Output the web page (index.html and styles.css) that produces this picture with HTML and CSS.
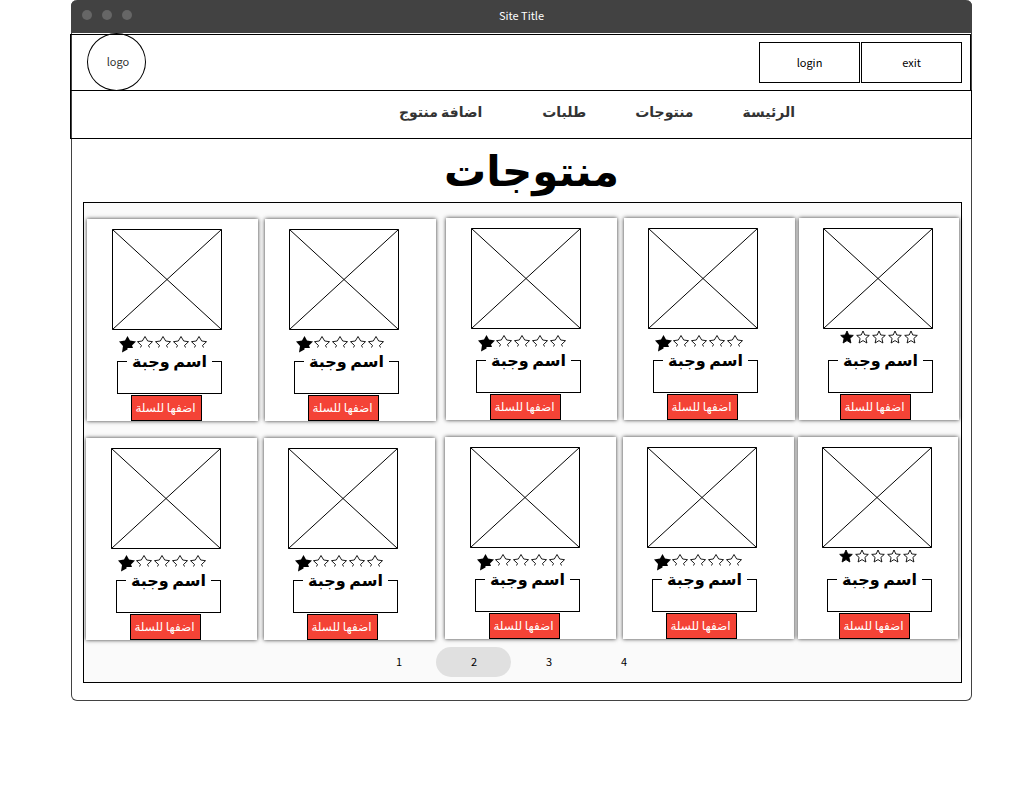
FILE: index.html
```
<!DOCTYPE html>
<html lang="ar">
<head>
<meta charset="utf-8">
<meta name="viewport" content="width=device-width, initial-scale=1">
<title>Site Title</title>
<link rel="stylesheet" href="styles.css">
</head>
<body>
<svg class="defs" aria-hidden="true">
  <symbol id="outline" viewBox="0 0 16 16"><path d="M3.500 11.500 4.500 9.500 .5 5.700 5.300 5 8 .5 10.700 5 15.500 5.700 11.500 9.500 12.500 11.500" fill="none" stroke="#000" stroke-width=".9"/></symbol>
  <symbol id="leaning" viewBox="0 0 17 17"><path d="M0 5.500 6 4.500 8.500 0 11 4.500 17 5.500 13 9.500 14 12 8.500 12 8.500 13.500 3 16.500 4 10Z"/></symbol>
  <symbol id="stars" viewBox="0 0 90 17">
    <use href="#leaning" width="17" height="17"/>
    <use href="#outline" x="18" width="16" height="16"/><use href="#outline" x="36" width="16" height="16"/><use href="#outline" x="54" width="16" height="16"/><use href="#outline" x="72" width="16" height="16"/>
  </symbol>
  <symbol id="star" viewBox="0 0 14 14"><path d="M7 1 8.800 5 13.300 5.400 9.900 8.400 10.900 13 7 10.600 3.100 13 4.100 8.400 .7 5.400 5.200 5Z" stroke="#000" stroke-width=".9"/></symbol>
  <symbol id="stars-even" viewBox="0 0 90 17">
    <use href="#star" width="14" height="14" fill="#000"/>
    <g fill="none"><use href="#star" x="16" width="14" height="14"/><use href="#star" x="32" width="14" height="14"/><use href="#star" x="48" width="14" height="14"/><use href="#star" x="64" width="14" height="14"/></g>
  </symbol>
  <symbol id="picture" viewBox="0 0 110 101"><path d="M.5 .5H109.500V100.500H.5ZM.5 .5 109.500 100.500M109.500 .5 .5 100.500" fill="none" stroke="#000"/></symbol>
</svg>
<div class="window">
  <div class="titlebar"><div class="dots"><i></i><i></i><i></i></div><span>Site Title</span></div>
  <header class="header">
    <a class="logo" href="#">logo</a>
    <div class="account"><button type="button">login</button><button type="button">exit</button></div>
  </header>
  <nav class="nav" dir="rtl">
    <a href="#">الرئيسة</a><a href="#">منتوجات</a><a href="#">طلبات</a><a class="nav-add" href="#">اضافة منتوج</a>
  </nav>
  <h1 class="title" dir="rtl">منتوجات</h1>
  <main class="panel">
    <section class="row">
      <article class="card"><svg class="picture"><use href="#picture"/></svg><svg class="stars"><use href="#stars"/></svg><fieldset dir="rtl"><legend>اسم وجبة</legend></fieldset><button type="button" dir="rtl">اضفها للسلة</button></article>
      <article class="card"><svg class="picture"><use href="#picture"/></svg><svg class="stars"><use href="#stars"/></svg><fieldset dir="rtl"><legend>اسم وجبة</legend></fieldset><button type="button" dir="rtl">اضفها للسلة</button></article>
      <article class="card"><svg class="picture"><use href="#picture"/></svg><svg class="stars"><use href="#stars"/></svg><fieldset dir="rtl"><legend>اسم وجبة</legend></fieldset><button type="button" dir="rtl">اضفها للسلة</button></article>
      <article class="card"><svg class="picture"><use href="#picture"/></svg><svg class="stars"><use href="#stars"/></svg><fieldset dir="rtl"><legend>اسم وجبة</legend></fieldset><button type="button" dir="rtl">اضفها للسلة</button></article>
      <article class="card card-even"><svg class="picture"><use href="#picture"/></svg><svg class="stars"><use href="#stars-even"/></svg><fieldset dir="rtl"><legend>اسم وجبة</legend></fieldset><button type="button" dir="rtl">اضفها للسلة</button></article>
    </section>
    <section class="row row-second">
      <article class="card"><svg class="picture"><use href="#picture"/></svg><svg class="stars"><use href="#stars"/></svg><fieldset dir="rtl"><legend>اسم وجبة</legend></fieldset><button type="button" dir="rtl">اضفها للسلة</button></article>
      <article class="card"><svg class="picture"><use href="#picture"/></svg><svg class="stars"><use href="#stars"/></svg><fieldset dir="rtl"><legend>اسم وجبة</legend></fieldset><button type="button" dir="rtl">اضفها للسلة</button></article>
      <article class="card"><svg class="picture"><use href="#picture"/></svg><svg class="stars"><use href="#stars"/></svg><fieldset dir="rtl"><legend>اسم وجبة</legend></fieldset><button type="button" dir="rtl">اضفها للسلة</button></article>
      <article class="card"><svg class="picture"><use href="#picture"/></svg><svg class="stars"><use href="#stars"/></svg><fieldset dir="rtl"><legend>اسم وجبة</legend></fieldset><button type="button" dir="rtl">اضفها للسلة</button></article>
      <article class="card card-even"><svg class="picture"><use href="#picture"/></svg><svg class="stars"><use href="#stars-even"/></svg><fieldset dir="rtl"><legend>اسم وجبة</legend></fieldset><button type="button" dir="rtl">اضفها للسلة</button></article>
    </section>
    <nav class="pages"><a href="#">1</a><a class="current" href="#" aria-current="page">2</a><a href="#">3</a><a href="#">4</a></nav>
  </main>
</div>
</body>
</html>
```
FILE: styles.css
```
* { box-sizing: border-box; }
body {
  margin: 0;
  padding: 0 50px 0 71px;
  background: #fff;
  color: #000;
  font: 11px/18px "Noto Sans CJK SC", "DejaVu Sans", sans-serif;
}
a { color: inherit; text-decoration: none; }
button { margin: 0; padding: 0 0 2px; border: 1px solid #000; background: #fff; color: inherit; font: inherit; }
.defs { position: absolute; width: 0; height: 0; }

.window { border: 1px solid #424242; border-top: 0; border-radius: 6px; padding-bottom: 17px; }
.titlebar {
  display: grid;
  grid-template-columns: 1fr auto 1fr;
  align-items: center;
  height: 33px;
  margin: 0 -1px 1px;
  padding: 0 11px 3px;
  border-radius: 6px 6px 0 0;
  background: #424242;
  color: #fff;
}
.dots { display: flex; gap: 10px; }
.dots i { width: 10px; height: 10px; border-radius: 50%; background: #666; }

.header {
  display: flex;
  justify-content: space-between;
  align-items: center;
  height: 57px;
  margin-left: -2px;
  padding: 0 8px 0 16px;
  border: 1px solid #000;
}
.logo {
  display: grid;
  place-items: center;
  width: 59px;
  height: 58px;
  margin: -2px 0 0;
  padding: 0 0 2px 3px;
  border: 1px solid #000;
  border-radius: 50%;
  color: #333;
}
.account { display: flex; gap: 1px; }
.account button { width: 101px; height: 41px; }

.nav {
  display: flex;
  gap: 49px;
  height: 49px;
  margin: -1px -1px 0 -2px;
  padding: 10px 176px 0 0;
  border: 1px solid #000;
  color: #333;
  font: bold 14px/20px "Noto Sans CJK SC", "DejaVu Sans", sans-serif;
}
.nav-add { margin-right: 11px; }

.title {
  height: 63px;
  margin: 0;
  padding-left: 20px;
  font: bold 42px/66px "DejaVu Sans", sans-serif;
  text-align: center;
}

.panel { margin: 0 9px 0 11px; padding: 15px 0 5px; border: 1px solid #000; background: #fafafa; }
.row {
  display: grid;
  grid-template-columns: 178fr 181fr 178fr 175fr 160fr;
  padding: 0 2px 0 3px;
}
.row-second { margin-top: 16px; padding: 0 3px 0 2px; }
.card {
  display: flex;
  flex-direction: column;
  align-items: flex-start;
  height: 202px;
  margin-right: 7px;
  padding: 10px 0 0 25px;
  background: #fff;
  box-shadow: 0 0 4px rgba(0, 0, 0, .8);
}
.card:nth-child(-n+2) { margin-top: 1px; }
.card:nth-child(2) { margin-right: 10px; padding-left: 24px; }
.card:nth-child(4) { margin-right: 4px; padding-left: 24px; }
.card:nth-child(5) { margin-right: 0; padding-left: 24px; }
.picture { flex: none; width: 110px; height: 101px; }
.stars { flex: none; width: 90px; height: 17px; margin: 6px 0 -3px 7px; }
.card fieldset {
  flex: none;
  width: 105px;
  min-width: 0;
  height: 44px;
  margin: 0 0 1px 5px;
  padding: 0 9px;
  border: 1px solid #000;
}
.card legend {
  width: 85px;
  padding: 0 0 2px;
  font: bold 16px/20px "Noto Sans CJK SC", "DejaVu Sans", sans-serif;
  text-align: center;
}
.card button {
  flex: none;
  width: 71px;
  height: 26px;
  margin-left: 19px;
  padding-right: 2px;
  background: #f44336;
  color: #fff;
  font: 12px/18px "Noto Sans CJK SC", "DejaVu Sans", sans-serif;
}
.card-even .stars { margin: 1px 0 2px 17px; }
.card-even button { margin-left: 17px; }

.pages { display: flex; justify-content: center; margin-top: 7px; padding-right: 23px; }
.pages a { width: 75px; height: 30px; padding-left: 1px; border-radius: 15px; line-height: 28px; text-align: center; }
.pages .current { background: #e0e0e0; }
```
